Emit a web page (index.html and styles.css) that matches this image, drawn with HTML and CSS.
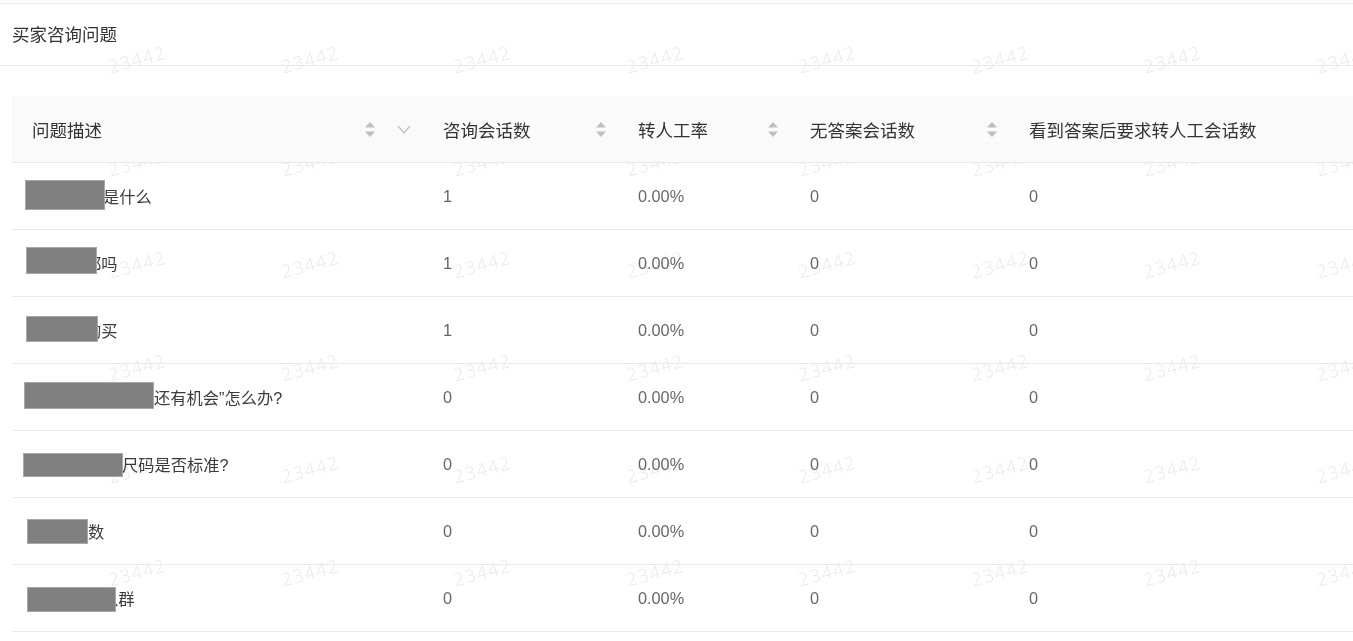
FILE: index.html
```html
<!DOCTYPE html>
<html lang="zh-CN">
<head>
<meta charset="utf-8">
<title>买家咨询问题</title>
<link rel="stylesheet" href="styles.css">
</head>
<body>
<div class="watermark" aria-hidden="true">
  <div class="wm-grid">
    <span>23442</span><span>23442</span><span>23442</span><span>23442</span><span>23442</span><span>23442</span><span>23442</span><span>23442</span>
    <span>23442</span><span>23442</span><span>23442</span><span>23442</span><span>23442</span><span>23442</span><span>23442</span><span>23442</span>
    <span>23442</span><span>23442</span><span>23442</span><span>23442</span><span>23442</span><span>23442</span><span>23442</span><span>23442</span>
    <span>23442</span><span>23442</span><span>23442</span><span>23442</span><span>23442</span><span>23442</span><span>23442</span><span>23442</span>
    <span>23442</span><span>23442</span><span>23442</span><span>23442</span><span>23442</span><span>23442</span><span>23442</span><span>23442</span>
    <span>23442</span><span>23442</span><span>23442</span><span>23442</span><span>23442</span><span>23442</span><span>23442</span><span>23442</span>
    <span>23442</span><span>23442</span><span>23442</span><span>23442</span><span>23442</span><span>23442</span><span>23442</span><span>23442</span>
  </div>
</div>

<section class="card">
  <div class="card-title">买家咨询问题</div>

  <div class="table">
    <div class="row head">
      <div class="cell">
        <span>问题描述</span>
        <span class="icons">
          <svg class="sort" width="10" height="15" viewBox="0 0 10 15"><polygon points="0,5.5 5,0 10,5.5" /><polygon points="0,9.5 10,9.5 5,15" /></svg>
          <svg class="chev" width="14" height="9" viewBox="0 0 14 9"><polyline points="1,1 7,8 13,1" /></svg>
        </span>
      </div>
      <div class="cell">
        <span>咨询会话数</span>
        <span class="icons"><svg class="sort" width="10" height="15" viewBox="0 0 10 15"><polygon points="0,5.5 5,0 10,5.5" /><polygon points="0,9.5 10,9.5 5,15" /></svg></span>
      </div>
      <div class="cell">
        <span>转人工率</span>
        <span class="icons"><svg class="sort" width="10" height="15" viewBox="0 0 10 15"><polygon points="0,5.5 5,0 10,5.5" /><polygon points="0,9.5 10,9.5 5,15" /></svg></span>
      </div>
      <div class="cell">
        <span>无答案会话数</span>
        <span class="icons"><svg class="sort" width="10" height="15" viewBox="0 0 10 15"><polygon points="0,5.5 5,0 10,5.5" /><polygon points="0,9.5 10,9.5 5,15" /></svg></span>
      </div>
      <div class="cell">
        <span>看到答案后要求转人工会话数</span>
      </div>
    </div>

    <div class="row">
      <div class="cell desc"><span class="redact r1"></span>是什么</div>
      <div class="cell num">1</div>
      <div class="cell num">0.00%</div>
      <div class="cell num">0</div>
      <div class="cell num">0</div>
    </div>
    <div class="row">
      <div class="cell desc"><span class="redact r2"></span>都吗</div>
      <div class="cell num">1</div>
      <div class="cell num">0.00%</div>
      <div class="cell num">0</div>
      <div class="cell num">0</div>
    </div>
    <div class="row">
      <div class="cell desc"><span class="redact r3"></span>购买</div>
      <div class="cell num">1</div>
      <div class="cell num">0.00%</div>
      <div class="cell num">0</div>
      <div class="cell num">0</div>
    </div>
    <div class="row">
      <div class="cell desc"><span class="redact r4"></span>还有机会”怎么办?</div>
      <div class="cell num">0</div>
      <div class="cell num">0.00%</div>
      <div class="cell num">0</div>
      <div class="cell num">0</div>
    </div>
    <div class="row">
      <div class="cell desc"><span class="redact r5"></span>尺码是否标准?</div>
      <div class="cell num">0</div>
      <div class="cell num">0.00%</div>
      <div class="cell num">0</div>
      <div class="cell num">0</div>
    </div>
    <div class="row">
      <div class="cell desc"><span class="redact r6"></span>数</div>
      <div class="cell num">0</div>
      <div class="cell num">0.00%</div>
      <div class="cell num">0</div>
      <div class="cell num">0</div>
    </div>
    <div class="row">
      <div class="cell desc"><span class="redact r7"></span>入群</div>
      <div class="cell num">0</div>
      <div class="cell num">0.00%</div>
      <div class="cell num">0</div>
      <div class="cell num">0</div>
    </div>
  </div>
</section>
</body>
</html>
```

FILE: styles.css
```css
html {
  background: #fff;
}

html, body {
  margin: 0;
  padding: 0;
}

body {
  font-family: "Liberation Sans", "Noto Sans CJK SC", sans-serif;
  color: #333;
  overflow: hidden;
}

/* watermark layer */
.watermark {
  position: fixed;
  inset: 0;
  overflow: hidden;
  z-index: -1;
  pointer-events: none;
}

.wm-grid {
  position: absolute;
  left: 51px;
  top: 8px;
  display: grid;
  grid-template-columns: repeat(8, 172.5px);
  grid-auto-rows: 102.5px;
}

.wm-grid span {
  display: flex;
  align-items: center;
  justify-content: center;
  font-family: "Open Sans", sans-serif;
  font-weight: 300;
  font-size: 18px;
  letter-spacing: 1.5px;
  color: #e8e8e8;
  transform: rotate(-15deg);
}

/* card */
.card {
  margin-top: 3px;
  border-top: 1px solid #e8e8e8;
}

.card-title {
  box-sizing: content-box;
  height: 59px;
  padding: 2px 0 0 12px;
  line-height: 59px;
  font-size: 17.5px;
  color: #333;
  border-bottom: 1px solid #e8e8e8;
}

/* table */
.table {
  margin: 30px 0 0 12px;
}

.row {
  display: grid;
  grid-template-columns: 411px 195px 172px 219px 1fr;
  height: 66px;
  border-bottom: 1px solid #e8e8e8;
}

.cell {
  display: flex;
  align-items: center;
  padding: 0 12px 0 20px;
  white-space: nowrap;
  font-size: 16.25px;
}

.row.head {
  background: #fafafa;
}

.row.head .cell {
  font-size: 17.5px;
  color: #333;
}

.icons {
  margin-left: auto;
  display: flex;
  align-items: center;
  gap: 22px;
}

.sort polygon {
  fill: #bfbfbf;
}

.chev polyline {
  fill: none;
  stroke: #bfbfbf;
  stroke-width: 1.2;
}

.desc {
  color: #3a3a3a;
}

.num {
  color: #666;
}

/* redaction blocks */
.redact {
  position: relative;
  z-index: 1;
  flex: none;
  background: #808080;
  border: 1px solid #a8a8a8;
  box-sizing: border-box;
}

.r1 { width: 80px; height: 30px; margin-left: -7px; margin-right: -2px; margin-top: -3px; }
.r2 { width: 71px; height: 27px; margin-left: -6px; margin-right: -12px; margin-top: -5px; }
.r3 { width: 72px; height: 26px; margin-left: -6px; margin-right: -13px; margin-top: -3px; }
.r4 { width: 130px; height: 27px; margin-left: -8px; margin-right: 0; margin-top: -3px; }
.r5 { width: 100px; height: 24px; margin-left: -9px; margin-right: -1px; margin-top: 1px; }
.r6 { width: 61px; height: 25px; margin-left: -5px; margin-right: 0; margin-top: 0; }
.r7 { width: 89px; height: 25px; margin-left: -5px; margin-right: -14px; margin-top: 3px; }
```
